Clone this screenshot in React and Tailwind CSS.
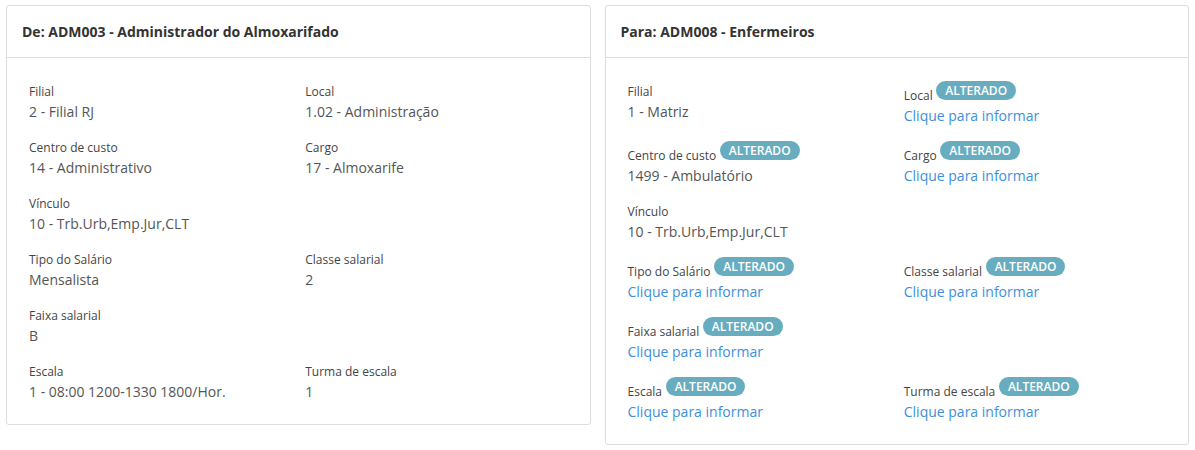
const left = {
  title: 'De: ADM003 - Administrador do Almoxarifado',
  rows: [
    [{ label: 'Filial', value: '2 - Filial RJ' }, { label: 'Local', value: '1.02 - Administração' }],
    [{ label: 'Centro de custo', value: '14 - Administrativo' }, { label: 'Cargo', value: '17 - Almoxarife' }],
    [{ label: 'Vínculo', value: '10 - Trb.Urb,Emp.Jur,CLT' }],
    [{ label: 'Tipo do Salário', value: 'Mensalista' }, { label: 'Classe salarial', value: '2' }],
    [{ label: 'Faixa salarial', value: 'B' }],
    [{ label: 'Escala', value: '1 - 08:00 1200-1330 1800/Hor.' }, { label: 'Turma de escala', value: '1' }],
  ],
};

const right = {
  title: 'Para: ADM008 - Enfermeiros',
  rows: [
    [{ label: 'Filial', value: '1 - Matriz' }, { label: 'Local', changed: true }],
    [{ label: 'Centro de custo', value: '1499 - Ambulatório', changed: true }, { label: 'Cargo', changed: true }],
    [{ label: 'Vínculo', value: '10 - Trb.Urb,Emp.Jur,CLT' }],
    [{ label: 'Tipo do Salário', changed: true }, { label: 'Classe salarial', changed: true }],
    [{ label: 'Faixa salarial', changed: true }],
    [{ label: 'Escala', changed: true }, { label: 'Turma de escala', changed: true }],
  ],
};

function Field({ label, value, changed }) {
  return (
    <div className="px-[7px]">
      <div className="text-sm leading-5">
        <span className="text-xs text-[#444]">{label}</span>
        {changed && (
          <>
            {' '}
            <span className="inline-block align-baseline overflow-hidden h-[19px] leading-[19px] px-[9px] rounded-full bg-[#67adbf] text-white text-xs font-semibold">
              ALTERADO
            </span>
          </>
        )}
      </div>
      {value ? (
        <div className="mt-px text-sm leading-5 text-[#555]">{value}</div>
      ) : (
        <a href="#" className="block mt-px text-sm leading-5 text-[#3d8fdc]">Clique para informar</a>
      )}
    </div>
  );
}

function Card({ title, rows }) {
  return (
    <div className="bg-white border border-[#dddddd] rounded-[3px]">
      <div className="h-[52px] px-[15px] flex items-center border-b border-[#dddddd]">
        <h3 className="text-sm font-bold text-[#333]">{title}</h3>
      </div>
      <div className="px-[15px] pt-[23px] pb-[22px] flex flex-col gap-[15px]">
        {rows.map((row, i) => (
          <div key={i} className="grid grid-cols-2">
            {row.map((f) => (
              <Field key={f.label} {...f} />
            ))}
          </div>
        ))}
      </div>
    </div>
  );
}

export default function App() {
  return (
    <div className="min-h-screen bg-white px-[6px] pt-[5px] font-['Open_Sans',sans-serif]">
      <div className="grid grid-cols-2 gap-[14px] items-start">
        <Card {...left} />
        <Card {...right} />
      </div>
    </div>
  );
}
